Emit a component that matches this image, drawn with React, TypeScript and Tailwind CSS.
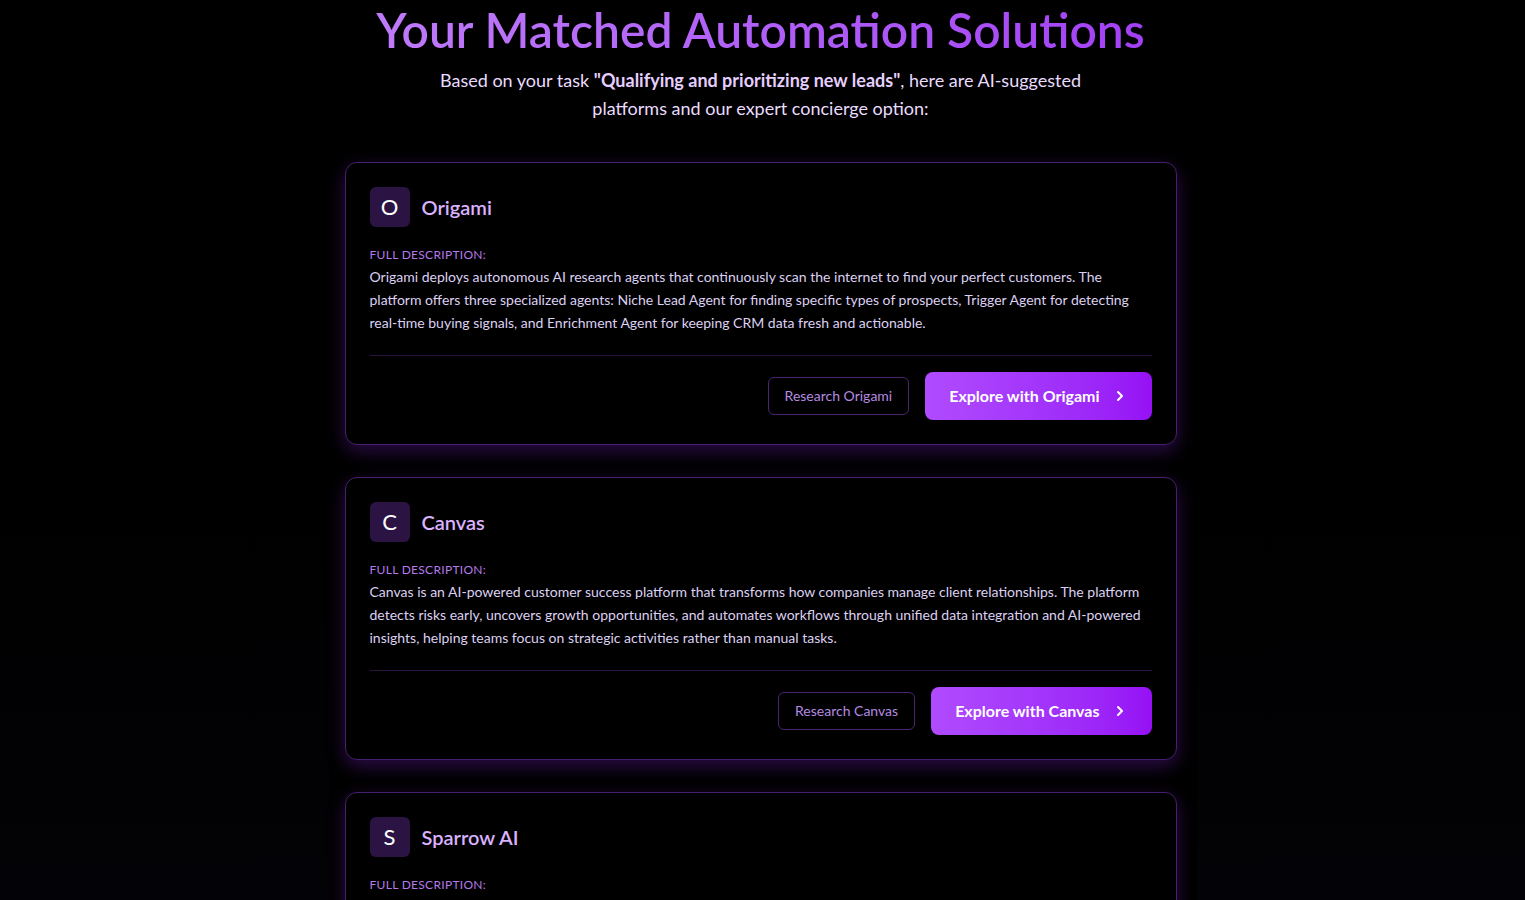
import React from 'react';
import { ChevronRight } from 'lucide-react';

type Platform = { name: string; description: string };

const platforms: Platform[] = [
    {
        name: 'Origami',
        description:
            'Origami deploys autonomous AI research agents that continuously scan the internet to find your perfect customers. The platform offers three specialized agents: Niche Lead Agent for finding specific types of prospects, Trigger Agent for detecting real-time buying signals, and Enrichment Agent for keeping CRM data fresh and actionable.',
    },
    {
        name: 'Canvas',
        description:
            'Canvas is an AI-powered customer success platform that transforms how companies manage client relationships. The platform detects risks early, uncovers growth opportunities, and automates workflows through unified data integration and AI-powered insights, helping teams focus on strategic activities rather than manual tasks.',
    },
    {
        name: 'Sparrow AI',
        description:
            'Sparrow AI qualifies inbound leads automatically, scoring every prospect against your ideal customer profile and routing the hottest opportunities straight to your sales team so nobody waits on a follow-up.',
    },
];

const PlatformCard = ({ platform }: { platform: Platform }) => (
    <div className="bg-black border border-[#45206e] rounded-xl p-6 shadow-[0_6px_18px_rgba(126,34,206,0.35)]">
        <div className="flex items-center gap-3">
            <div className="w-10 h-10 rounded-md bg-[#2b1444] flex items-center justify-center text-white text-[22px] leading-none">
                {platform.name.charAt(0)}
            </div>
            <h3 className="text-xl font-semibold text-purple-300">{platform.name}</h3>
        </div>
        <p className="mt-5 text-xs leading-4 uppercase tracking-wide text-[#b57ae8]">Full Description:</p>
        <p className="mt-0.5 text-sm leading-[23px] text-[#ddd0f2]">{platform.description}</p>
        <div className="mt-[21px] pt-4 border-t border-[#2a1540] flex items-center justify-end gap-4">
            <button className="px-4 py-2 text-sm text-[#b58ae0] border border-[#4c2570] rounded-md">
                Research {platform.name}
            </button>
            <button className="flex items-center gap-3 px-6 py-3 rounded-lg bg-gradient-to-r from-[#b04bff] to-[#9610f5] text-white font-bold text-base">
                Explore with {platform.name}
                <ChevronRight className="w-4 h-4" strokeWidth={3} />
            </button>
        </div>
    </div>
);

const App: React.FC = () => {
    return (
        <div
            className="min-h-screen bg-gradient-to-b from-black to-[#06060d]"
            style={{ fontFamily: 'Lato, "Noto Sans", sans-serif' }}
        >
            <div className="mx-auto w-[868px] min-h-screen bg-black pl-4 pr-5 pt-1.5">
                {/* Header */}
                <div className="text-center">
                    <h1 className="text-5xl leading-[48px] font-semibold bg-gradient-to-r from-[#c07cf9] to-[#a23cf5] bg-clip-text text-transparent">
                        Your Matched Automation Solutions
                    </h1>
                    <p className="mt-3 mx-auto max-w-[660px] text-lg leading-7 text-[#eadcff]">
                        Based on your task <span className="font-bold text-[#e6cfff]">"Qualifying and prioritizing new leads"</span>, here are AI-suggested platforms and our expert concierge option:
                    </p>
                </div>

                {/* Platform cards */}
                <div className="mt-10 space-y-8 pb-16">
                    {platforms.map((p) => (
                        <PlatformCard key={p.name} platform={p} />
                    ))}
                </div>
            </div>
        </div>
    );
};

export default App;
